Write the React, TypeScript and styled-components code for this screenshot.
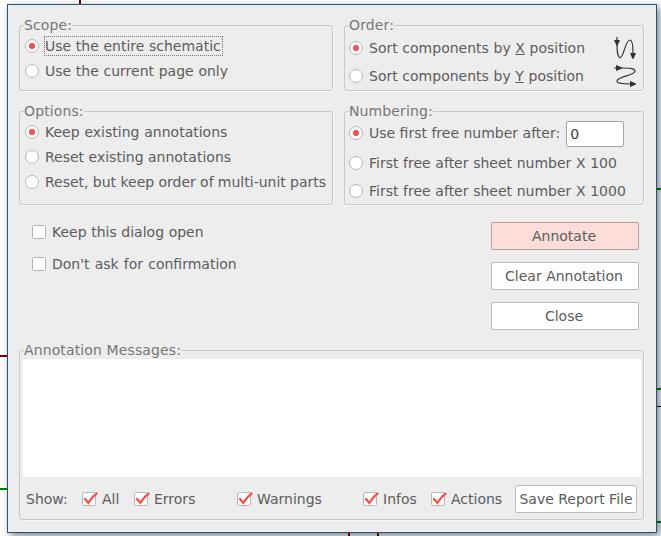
import React from "react";
import styled, { createGlobalStyle, css } from "styled-components";

const GlobalStyle = createGlobalStyle`
  body { margin: 0; overflow: hidden; background: #fff; }
  * { box-sizing: border-box; }
`;

const Desktop = styled.div`
  position: relative;
  width: 661px;
  height: 536px;
  padding: 4px 4px 3px 7px;
  overflow: hidden;
  background: #fff;
  color: #5c5c5c;
  font: 14px/18px "DejaVu Sans", sans-serif;
  white-space: nowrap;
`;

const Schematic = styled.svg`
  position: absolute;
  inset: 0;
`;

const Dialog = styled.main`
  position: relative;
  width: 650px;
  height: 529px;
  padding: 11px 12px 12px 11px;
  display: flex;
  flex-direction: column;
  border: 1px solid #22557f;
  background: #ededed;
  box-shadow: 3px 3px 8px rgba(0, 0, 0, 0.5);
`;

const GroupGrid = styled.div`
  display: grid;
  grid-template-columns: 314px 300px;
  gap: 11px;
`;

const Group = styled.fieldset<{ $height: number }>`
  margin: 0;
  padding: 0;
  min-width: 0;
  height: ${(p) => p.$height}px;
  border: 1px solid #c8c8c8;
  border-radius: 3px;
  box-shadow: 1px 1px 0 #f7f7f7;
`;

const Legend = styled.legend`
  height: 19px;
  margin-left: 4px;
  padding: 0;
  line-height: 19px;
  letter-spacing: 0.12px;
  color: #777;
`;

const Options = styled.div<{ $rows: string; $top: number; $left: number }>`
  display: grid;
  grid-template-rows: ${(p) => p.$rows};
  align-items: center;
  margin-top: ${(p) => p.$top}px;
  padding-left: ${(p) => p.$left}px;
`;

const Choice = styled.label`
  display: flex;
  align-items: center;
  gap: 6px;
`;

const Radio = styled.span<{ $on?: boolean }>`
  flex: none;
  width: 14px;
  height: 14px;
  border: 1px solid #b9b9b9;
  border-radius: 50%;
  background: ${(p) => (p.$on ? "radial-gradient(circle, #f5504b 2.7px, #fff 3.5px)" : "#fff")};
`;

const Caption = styled.span<{ $focused?: boolean; $spread?: number }>`
  word-spacing: ${(p) => p.$spread ?? 0}px;
  ${(p) =>
    p.$focused &&
    css`
      padding-right: 1px;
      outline: 1px dotted #777;
    `}
`;

const Row = styled.div`
  display: flex;
  align-items: center;
`;

const NumberRow = styled(Row)`
  ${Choice} {
    margin-bottom: 2px;
  }
`;

const OrderIcon = styled.svg`
  flex: none;
  margin: 0 5px 0 auto;
`;

const NumberInput = styled.input`
  width: 58px;
  height: 26px;
  margin-left: 6px;
  padding: 0 3px;
  border: 1px solid #a3a3a3;
  border-radius: 2px;
  background: #fff;
  color: #3c3c3c;
  font: inherit;
  outline: none;
`;

const Actions = styled.section`
  display: flex;
  justify-content: space-between;
  height: 136px;
  padding: 17px 5px 0 13px;
`;

const CheckList = styled.div`
  display: flex;
  flex-direction: column;
  gap: 14px;
  padding-top: 1px;
`;

const ButtonStack = styled.div`
  display: flex;
  flex-direction: column;
  gap: 12px;
  width: 148px;
`;

const Button = styled.button<{ $primary?: boolean }>`
  height: 28px;
  padding: 0 2px 0 0;
  border: 1px solid ${(p) => (p.$primary ? "#b5a1a1" : "#bcbcbc")};
  border-radius: 2px;
  background: ${(p) => (p.$primary ? "#fddcda" : "#fff")};
  color: #5c5c5c;
  font: inherit;
`;

const SaveButton = styled(Button)`
  width: 122px;
  padding: 0;
`;

const MessageLog = styled.div`
  height: 118px;
  margin: -1px 2px 0 3px;
  background: #fff;
`;

const Filters = styled.div`
  display: grid;
  grid-template-columns: 56px 52px 103px 126px 68px 84px auto;
  align-items: center;
  height: 44px;
  padding-left: 6px;
`;

const BoxFrame = styled.svg`
  flex: none;
  overflow: visible;
`;

function CheckBox({ on = false }: { on?: boolean }) {
  return (
    <BoxFrame width="14" height="14" viewBox="0 0 14 14">
      <rect x=".5" y=".5" width="13" height="13" rx="1.5" fill="#fff" stroke="#b9b9b9" />
      {on && <path d="M2.3 6.3 6.3 10.8 Q10 4.8 15.2 1" fill="none" stroke="#f5504b" strokeWidth="2.2" />}
    </BoxFrame>
  );
}

function Check({ text, on, spread }: { text: string; on?: boolean; spread?: number }) {
  return (
    <Choice>
      <CheckBox on={on} />
      <Caption $spread={spread}>{text}</Caption>
    </Choice>
  );
}

interface RadioChoiceProps {
  on?: boolean;
  focused?: boolean;
  spread?: number;
  children: React.ReactNode;
}

function RadioChoice({ on, focused, spread, children }: RadioChoiceProps) {
  return (
    <Choice>
      <Radio $on={on} />
      <Caption $focused={focused} $spread={spread}>{children}</Caption>
    </Choice>
  );
}

export default function App() {
  return (
    <>
      <GlobalStyle />
      <Desktop>
        <Schematic width="661" height="536">
          <path d="M80 0V8M0 356H10M349 528V536M378 528V536" stroke="#840000" strokeWidth="2" />
          <path d="M0 489H10M650 189H661M650 389H661M650 522H661" stroke="#008400" strokeWidth="2" />
          <path d="M650 406.5H661" stroke="#000" />
        </Schematic>
        <Dialog>
          <GroupGrid>
            <Group $height={75}>
              <Legend>Scope:</Legend>
              <Options $rows="25px 25px" $top={-2} $left={5}>
                <RadioChoice on focused spread={0.2}>Use the entire schematic</RadioChoice>
                <RadioChoice spread={0.25}>Use the current page only</RadioChoice>
              </Options>
            </Group>
            <Group $height={75}>
              <Legend>Order:</Legend>
              <Options $rows="28px 28px" $top={-1} $left={4}>
                <Row>
                  <RadioChoice on spread={0.2}>Sort components by <u>X</u> position</RadioChoice>
                  <OrderIcon width="24" height="26" viewBox="0 0 24 26">
                    <path d="M3 2V10C3 17 4 22.7 6 22.7C10 22.7 11 5 16 5C18.5 5 19 12 19 18" fill="none" stroke="#333" strokeWidth="1.2" />
                    <path d="M0 5H6L3.6 10.5H2.4ZM16 18H22L19.6 23.7H18.4Z" fill="#333" />
                  </OrderIcon>
                </Row>
                <Row>
                  <RadioChoice spread={0.2}>Sort components by <u>Y</u> position</RadioChoice>
                  <OrderIcon width="24" height="26" viewBox="0 0 24 26">
                    <path d="M0 5H8C14 5 21 5 21 8.5C21 12 3 14 3 18C3 20 8 21 17 21" fill="none" stroke="#333" strokeWidth="1.2" />
                    <path d="M2 2V8L8 5.6V4.4ZM16 18V24L22 21.6V20.4Z" fill="#333" />
                  </OrderIcon>
                </Row>
              </Options>
            </Group>
            <Group $height={103}>
              <Legend>Options:</Legend>
              <Options $rows="25px 25px 25px" $top={-2} $left={5}>
                <RadioChoice on spread={0.4}>Keep existing annotations</RadioChoice>
                <RadioChoice>Reset existing annotations</RadioChoice>
                <RadioChoice spread={-0.15}>Reset, but keep order of multi-unit parts</RadioChoice>
              </Options>
            </Group>
            <Group $height={103}>
              <Legend>Numbering:</Legend>
              <Options $rows="30px 28px 28px" $top={-2} $left={4}>
                <NumberRow>
                  <RadioChoice on>Use first free number after:</RadioChoice>
                  <NumberInput defaultValue="0" />
                </NumberRow>
                <RadioChoice spread={0.2}>First free after sheet number X 100</RadioChoice>
                <RadioChoice spread={0.2}>First free after sheet number X 1000</RadioChoice>
              </Options>
            </Group>
          </GroupGrid>
          <Actions>
            <CheckList>
              <Check text="Keep this dialog open" spread={0.15} />
              <Check text="Don't ask for confirmation" spread={0.7} />
            </CheckList>
            <ButtonStack>
              <Button $primary>Annotate</Button>
              <Button>Clear Annotation</Button>
              <Button>Close</Button>
            </ButtonStack>
          </Actions>
          <Group $height={179}>
            <Legend>Annotation Messages:</Legend>
            <MessageLog />
            <Filters>
              <span>Show:</span>
              <Check text="All" on />
              <Check text="Errors" on />
              <Check text="Warnings" on />
              <Check text="Infos" on />
              <Check text="Actions" on />
              <SaveButton>Save Report File</SaveButton>
            </Filters>
          </Group>
        </Dialog>
      </Desktop>
    </>
  );
}
